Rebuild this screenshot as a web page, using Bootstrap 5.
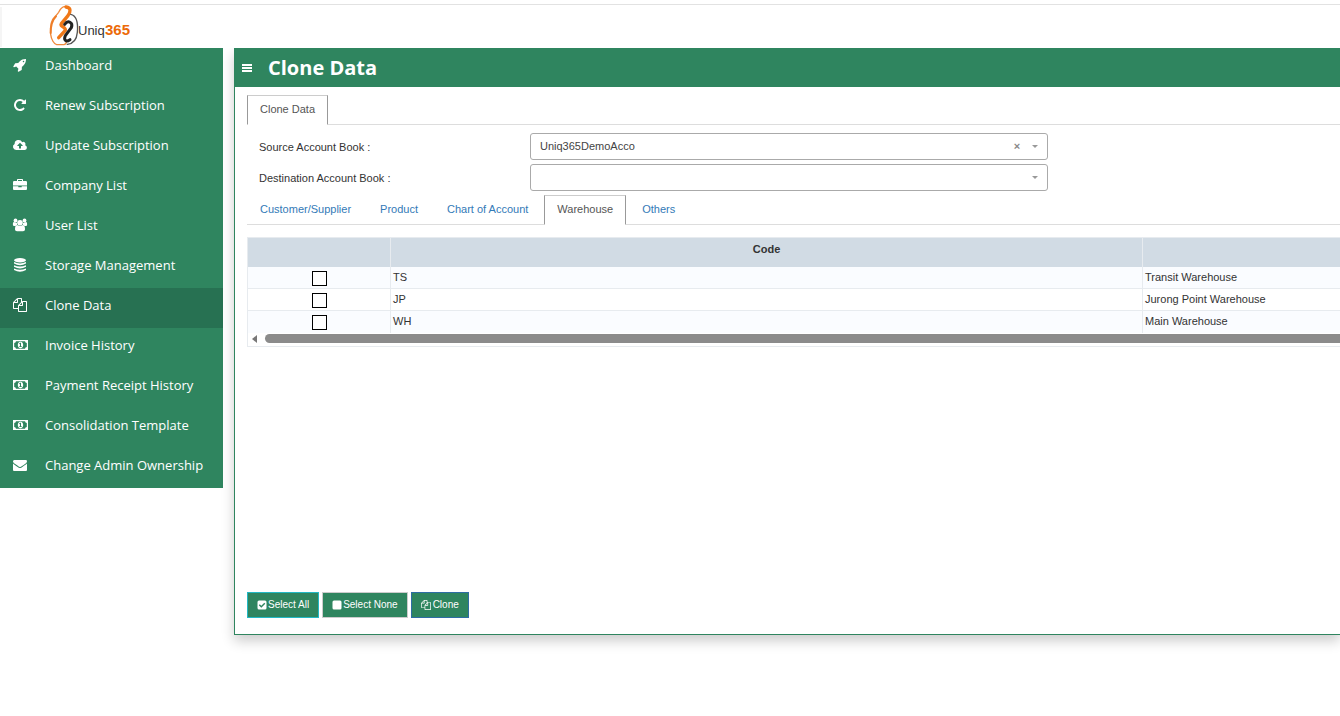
<!DOCTYPE html>
<html lang="en">
<head>
<meta charset="utf-8">
<meta name="viewport" content="width=device-width, initial-scale=1">
<title>Uniq365 - Clone Data</title>
<link href="https://cdn.jsdelivr.net/npm/bootstrap@5.3.0/dist/css/bootstrap.min.css" rel="stylesheet">
<style>
:root { --green: #2f855f; --green-dark: #277152; --line: #ddd; }
body { font-family: "Liberation Sans", Arial, sans-serif; font-size: 11px; line-height: 16px; color: #333; }
.topbar { margin-top: 4px; height: 44px; border-top: 1px solid #e2e2e2; padding-left: 48px; background: linear-gradient(#f5f5f5, #f5f5f5) 0 2px / 2px 40px no-repeat; }
.shell { padding-bottom: 30px; overflow: hidden; }
.side { width: 223px; background: var(--green); }
.side .nav-link { height: 40px; padding: 0 0 6px 13px; color: #fff; font: 13px/18px "Open Sans", sans-serif; }
.side .nav-link.active { background: var(--green-dark); }
.side svg { width: 14px; height: 14px; margin-right: 18px; overflow: visible; }
svg { fill: currentColor; flex: none; }
.panel { margin-left: 11px; min-width: 0; min-height: 587px; border: 1px solid var(--green); border-width: 0 0 1px 1px; box-shadow: 0 6px 12px rgba(0,0,0,.2); }
.panel-head { height: 39px; padding-left: 7px; background: var(--green); color: #fff; }
.panel-head h1 { font: bold 20px/28px "Open Sans", sans-serif; }
.panel-main { padding: 8px 0 16px 12px; }
.nav-tabs { --bs-nav-tabs-border-radius: 0; border-color: var(--line); }
.nav-tabs .nav-link { padding: 5px 12px 7px; margin-right: 3px; font-size: 11px; line-height: 16px; color: #337ab7; border-color: transparent; }
.nav-tabs .nav-link.active { color: #555; border-color: #ccc #999 #fff #999; }
.field label { width: 283px; padding-left: 12px; }
.pick { flex: 0 1 518px; }
.pick select { height: 27px; padding: 0 40px 1px 9px; font-size: 11px; line-height: 16px; color: #444; border: 1px solid #aaa; border-radius: 3px; background: #fff; }
.caret { right: 10px; top: 12px; width: 6px; height: 3px; color: #999; pointer-events: none; }
.clear { right: 26px; top: 6px; width: 10px; height: 14px; font: bold 11px/14px "Liberation Sans", sans-serif; color: #888; }
.grid { margin-top: 12px; border: 1px solid #e7ebef; border-right: 0; }
.grid table { width: 1646px; table-layout: fixed; border-collapse: separate; border-spacing: 0; }
.c-tick { width: 143px; }
.c-code { width: 752px; }
.grid th { height: 29px; padding: 3px 0 0; vertical-align: top; text-align: center; background: #d1dbe4; border-right: 1px solid #e7ebef; }
.grid td { height: 22px; padding: 0 2px 2px; border-right: 1px solid #e7ebef; border-bottom: 1px solid #e7ebef; }
.grid td:first-child { padding: 0; }
.grid tr:nth-child(odd) td { background: #fafcff; }
.grid tr:last-child td { border-bottom: 0; }
.tick { display: block; appearance: none; width: 15px; height: 15px; margin: 3px auto 2px; border: 1px solid #000; background: #fff; }
.hbar { height: 13px; padding: 0 0 2px 4px; background: #fff; }
.hbar span { height: 9px; border-radius: 5px 0 0 5px; background: #8b8b8b; }
.actions { gap: 3px; }
.act { height: 26px; padding: 0 9px; border-radius: 0; font-size: 10px; line-height: 14px; color: #fff; background: var(--green); gap: 1px; }
.act svg { width: 10px; height: 10px; }
.b-all { border-color: #22b8c4; } .b-none { border-color: #ccc; } .b-clone { border-color: #2e6da4; gap: 2px; }
.logo-a { font: 13px "Liberation Sans", sans-serif; }
.logo-b { font: bold 15px "Liberation Sans", sans-serif; }
</style>
</head>
<body>
<svg class="d-none" aria-hidden="true">
  <symbol id="files" viewBox="0 0 1792 1792"><path d="M1696 384q40 0 68 28t28 68v1216q0 40-28 68t-68 28h-960q-40 0-68-28t-28-68v-288h-544q-40 0-68-28t-28-68v-672q0-40 20-88t48-76l408-408q28-28 76-48t88-20h416q40 0 68 28t28 68v328q68-40 128-40h416zm-544 213l-299 299h299v-299zm-640-384l-299 299h299v-299zm196 647l316-316v-416h-384v416q0 40-28 68t-68 28h-416v640h512v-256q0-40 20-88t48-76zm956 804v-1152h-384v416q0 40-28 68t-68 28h-416v640h896z"/></symbol>
  <symbol id="money" viewBox="0 0 15 14"><path fill-rule="evenodd" d="M0 2h15v10H0zM3 3.2A2 2 0 0 1 1.200 5v4A2 2 0 0 1 3 10.800h9A2 2 0 0 1 13.800 9V5A2 2 0 0 1 12 3.200zM7.500 3.700c1.700 0 2.700 1.400 2.700 3.300s-1 3.300-2.700 3.300S4.800 8.900 4.800 7s1-3.300 2.700-3.300zM7 4.800L6 5.700l.5.500.5-.3v2.300h-.8V9h2.600v-.8H8V4.800z"/></symbol>
</svg>

<header class="topbar">
  <a href="#" aria-label="Uniq365 home">
    <svg class="d-block" width="84" height="42" viewBox="0 0 84 42">
      <g fill="none" stroke-linecap="round" stroke-linejoin="round" transform="scale(.3333)">
        <path d="M52 5C40 4 36 14 32 22L22 34C10 44 6 66 8 88c2 16 10 29 18 31h22c8-2 10-12 4-16" stroke="#f08a3c" stroke-width="4"/>
        <path d="M24 34C12 46 8 58 8 84" stroke="#ee7d28" stroke-width="6"/>
        <path d="M54 6c16 2 14 14 6 26L40 56c-6 10 14 8 12 20L32 98" stroke="#f07818" stroke-width="10"/>
        <path d="M50 58C60 44 76 52 70 68L52 92c-6 14 2 20 14 12" stroke="#222" stroke-width="9"/>
        <path d="M68 28c20 4 22 32 20 54-2 22-12 34-30 36" stroke="#555" stroke-width="4"/>
      </g>
      <text class="logo-a" x="30" y="30" fill="#333">Uniq</text>
      <text class="logo-b" x="57" y="30" fill="#ec6a08">365</text>
    </svg>
  </a>
</header>

<div class="shell d-flex align-items-start">
  <nav class="side nav flex-column flex-shrink-0" aria-label="Main">
    <a class="nav-link d-flex align-items-center" href="#"><svg viewBox="0 0 1792 1792"><path d="M1440 448q0-40-28-68t-68-28-68 28-28 68 28 68 68 28 68-28 28-68zm224-288q0 249-75.500 430.500t-253.500 360.500q-81 80-195 176l-20 379q-2 16-16 26l-384 224q-7 4-16 4-12 0-23-9l-64-64q-13-14-8-32l85-276-281-281-276 85q-3 1-9 1-14 0-23-9l-64-64q-17-19-5-39l224-384q10-14 26-16l379-20q96-114 176-195 188-187 358-258t431-71q14 0 24 9.500t10 22.500z"/></svg>Dashboard</a>
    <a class="nav-link d-flex align-items-center" href="#"><svg viewBox="0 0 1792 1792"><path d="M1664 256v448q0 26-19 45t-45 19h-448q-42 0-59-40-17-39 14-69l138-138q-148-137-349-137-104 0-198.500 40.500t-163.500 109.500-109.500 163.500-40.500 198.500 40.500 198.500 109.500 163.500 163.500 109.500 198.500 40.500q119 0 225-52t179-147q7-10 23-12 15 0 25 9l137 138q9 8 9.500 20.500t-7.500 22.500q-109 132-264 204.500t-327 72.500q-156 0-298-61t-245-164-164-245-61-298 61-298 164-245 245-164 298-61q147 0 284.500 55.500t244.500 156.500l130-129q29-31 70-14 39 17 39 59z"/></svg>Renew Subscription</a>
    <a class="nav-link d-flex align-items-center" href="#"><svg viewBox="0 0 14 14"><path fill-rule="evenodd" d="M3.200 12A3.200 3.200 0 0 1 1.600 6 4 4 0 0 1 9.200 4.200a2.200 2.200 0 0 1 3 3A2.500 2.500 0 0 1 12 12zM7 4.800L4.300 7.500v.4H6v2.600h2V7.900h1.700v-.4z"/></svg>Update Subscription</a>
    <a class="nav-link d-flex align-items-center" href="#"><svg viewBox="0 0 14 14"><path fill-rule="evenodd" d="M4 3V1.800q0-.8.800-.8h4.400q.8 0 .8.800V3h2.800Q14 3 14 4v3.500H0V4q0-1 1.200-1zM5 3h4V2H5zM0 8.200h5.300v1h3.400v-1H14V11q0 1-1 1H1q-1 0-1-1z"/></svg>Company List</a>
    <a class="nav-link d-flex align-items-center" href="#"><svg viewBox="0 0 14 14"><circle cx="2.500" cy="2.500" r="1.900"/><circle cx="11.500" cy="2.500" r="1.900"/><path d="M0 7.500Q-.5 4 1 4l3 1v2L2.500 8H1zM14 7.500Q14.500 4 13 4l-3 1v2l1.500 1H13z"/><circle cx="7" cy="4.700" r="2.800"/><path d="M4.300 7q2.700 2 5.400 0Q12.200 7.300 12 11.500q0 1.800-2 1.800H4q-2 0-2-1.800Q1.800 7.300 4.300 7z"/></svg>User List</a>
    <a class="nav-link d-flex align-items-center" href="#"><svg viewBox="0 0 14 14"><ellipse cx="7" cy="2.300" rx="6" ry="2.200"/><path d="M1 4q6 2.800 12 0v1.500q-6 3.600-12 0zM1 7.200q6 2.800 12 0v1.500q-6 3.600-12 0zM1 10.400q6 2.800 12 0v1.500q-6 3.600-12 0z"/></svg>Storage Management</a>
    <a class="nav-link d-flex align-items-center active" aria-current="page" href="#"><svg><use href="#files"/></svg>Clone Data</a>
    <a class="nav-link d-flex align-items-center" href="#"><svg viewBox="0 0 14 14"><use href="#money" width="15" height="14"/></svg>Invoice History</a>
    <a class="nav-link d-flex align-items-center" href="#"><svg viewBox="0 0 14 14"><use href="#money" width="15" height="14"/></svg>Payment Receipt History</a>
    <a class="nav-link d-flex align-items-center" href="#"><svg viewBox="0 0 14 14"><use href="#money" width="15" height="14"/></svg>Consolidation Template</a>
    <a class="nav-link d-flex align-items-center" href="#"><svg viewBox="0 0 1792 1792"><path d="M1792 710v794q0 66-47 113t-113 47h-1472q-66 0-113-47t-47-113v-794q44 49 101 87 362 246 497 345 57 42 92.500 65.500t94.500 48 110 24.500h2q51 0 110-24.500t94.500-48 92.500-65.500q170-123 498-345 57-39 100-87zm0-294q0 79-49 151t-122 123q-376 261-468 325-10 7-42.500 31t-54 38.500-52 32.500-57.500 27-50 9h-2q-23 0-50-9t-57.500-27-52-32.500-54-38.500-42.500-31q-91-64-262-182.500t-205-142.500q-62-42-117-115.500t-55-136.500q0-78 41.500-130t118.500-52h1472q65 0 112.500 47t47.500 113z"/></svg>Change Admin Ownership</a>
  </nav>

  <main class="panel d-flex flex-column flex-grow-1 bg-white">
    <div class="panel-head d-flex align-items-center">
      <button type="button" class="btn p-0 border-0 text-white d-flex" aria-label="Toggle menu"><svg width="10" height="10" viewBox="0 0 10 10"><path d="M0 1h10v2H0zM0 4h10v2H0zM0 7h10v2H0z"/></svg></button>
      <h1 class="m-0 ms-3">Clone Data</h1>
    </div>
    <div class="panel-main d-flex flex-column flex-grow-1">
      <ul class="nav nav-tabs mb-2">
        <li class="nav-item"><a class="nav-link active" href="#">Clone Data</a></li>
      </ul>
      <div class="field d-flex align-items-center mb-1">
        <label for="source">Source Account Book :</label>
        <div class="pick position-relative">
          <select id="source" class="form-select"><option>Uniq365DemoAcco</option></select>
          <button type="button" class="clear btn p-0 border-0 position-absolute" aria-label="Clear">×</button>
          <svg class="caret position-absolute" viewBox="0 0 6 3"><path d="M0 0h6L3 3z"/></svg>
        </div>
      </div>
      <div class="field d-flex align-items-center mb-1">
        <label for="dest">Destination Account Book :</label>
        <div class="pick position-relative">
          <select id="dest" class="form-select"><option></option></select>
          <svg class="caret position-absolute" viewBox="0 0 6 3"><path d="M0 0h6L3 3z"/></svg>
        </div>
      </div>
      <ul class="nav nav-tabs">
        <li class="nav-item"><a class="nav-link" href="#">Customer/Supplier</a></li>
        <li class="nav-item"><a class="nav-link" href="#">Product</a></li>
        <li class="nav-item"><a class="nav-link" href="#">Chart of Account</a></li>
        <li class="nav-item"><a class="nav-link active" href="#">Warehouse</a></li>
        <li class="nav-item"><a class="nav-link" href="#">Others</a></li>
      </ul>
      <div class="grid overflow-hidden">
        <table>
          <colgroup><col class="c-tick"><col class="c-code"><col></colgroup>
          <thead><tr><th></th><th scope="col">Code</th><th></th></tr></thead>
          <tbody>
            <tr><td><input class="tick" type="checkbox" aria-label="Select TS"></td><td>TS</td><td>Transit Warehouse</td></tr>
            <tr><td><input class="tick" type="checkbox" aria-label="Select JP"></td><td>JP</td><td>Jurong Point Warehouse</td></tr>
            <tr><td><input class="tick" type="checkbox" aria-label="Select WH"></td><td>WH</td><td>Main Warehouse</td></tr>
          </tbody>
        </table>
        <div class="hbar d-flex align-items-center"><svg width="5" height="8" viewBox="0 0 5 8"><path fill="#777" d="M5 0v8L0 4z"/></svg><span class="flex-grow-1 ms-2"></span></div>
      </div>
      <div class="actions d-flex mt-auto">
        <button type="button" class="btn act b-all d-flex align-items-center"><svg viewBox="0 0 10 10"><path fill-rule="evenodd" d="M2 .5h6Q9.500.5 9.500 2v6Q9.500 9.500 8 9.500H2Q.5 9.500.5 8V2Q.5.500 2 .5zM4.300 7.800l4-4-1-1-3 3-1.500-1.500-1 1z"/></svg>Select All</button>
        <button type="button" class="btn act b-none d-flex align-items-center"><svg viewBox="0 0 10 10"><rect x=".5" y=".5" width="9" height="9" rx="1.500"/></svg>Select None</button>
        <button type="button" class="btn act b-clone d-flex align-items-center"><svg><use href="#files"/></svg>Clone</button>
      </div>
    </div>
  </main>
</div>
<script src="https://cdn.jsdelivr.net/npm/bootstrap@5.3.0/dist/js/bootstrap.bundle.min.js"></script>
</body>
</html>
